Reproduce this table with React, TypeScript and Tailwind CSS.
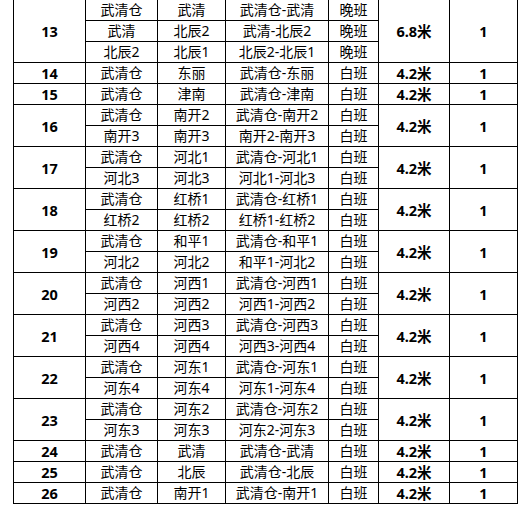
import React from "react";

type Group = { no: string; rows: string[][]; len: string; qty: string };

const groups: Group[] = [
  {
    no: "13",
    rows: [
      ["武清仓", "武清", "武清仓-武清", "晚班"],
      ["武清", "北辰2", "武清-北辰2", "晚班"],
      ["北辰2", "北辰1", "北辰2-北辰1", "晚班"],
    ],
    len: "6.8米",
    qty: "1",
  },
  { no: "14", rows: [["武清仓", "东丽", "武清仓-东丽", "白班"]], len: "4.2米", qty: "1" },
  { no: "15", rows: [["武清仓", "津南", "武清仓-津南", "白班"]], len: "4.2米", qty: "1" },
  {
    no: "16",
    rows: [
      ["武清仓", "南开2", "武清仓-南开2", "白班"],
      ["南开3", "南开3", "南开2-南开3", "白班"],
    ],
    len: "4.2米",
    qty: "1",
  },
  {
    no: "17",
    rows: [
      ["武清仓", "河北1", "武清仓-河北1", "白班"],
      ["河北3", "河北3", "河北1-河北3", "白班"],
    ],
    len: "4.2米",
    qty: "1",
  },
  {
    no: "18",
    rows: [
      ["武清仓", "红桥1", "武清仓-红桥1", "白班"],
      ["红桥2", "红桥2", "红桥1-红桥2", "白班"],
    ],
    len: "4.2米",
    qty: "1",
  },
  {
    no: "19",
    rows: [
      ["武清仓", "和平1", "武清仓-和平1", "白班"],
      ["河北2", "河北2", "和平1-河北2", "白班"],
    ],
    len: "4.2米",
    qty: "1",
  },
  {
    no: "20",
    rows: [
      ["武清仓", "河西1", "武清仓-河西1", "白班"],
      ["河西2", "河西2", "河西1-河西2", "白班"],
    ],
    len: "4.2米",
    qty: "1",
  },
  {
    no: "21",
    rows: [
      ["武清仓", "河西3", "武清仓-河西3", "白班"],
      ["河西4", "河西4", "河西3-河西4", "白班"],
    ],
    len: "4.2米",
    qty: "1",
  },
  {
    no: "22",
    rows: [
      ["武清仓", "河东1", "武清仓-河东1", "白班"],
      ["河东4", "河东4", "河东1-河东4", "白班"],
    ],
    len: "4.2米",
    qty: "1",
  },
  {
    no: "23",
    rows: [
      ["武清仓", "河东2", "武清仓-河东2", "白班"],
      ["河东3", "河东3", "河东2-河东3", "白班"],
    ],
    len: "4.2米",
    qty: "1",
  },
  { no: "24", rows: [["武清仓", "武清", "武清仓-武清", "白班"]], len: "4.2米", qty: "1" },
  { no: "25", rows: [["武清仓", "北辰", "武清仓-北辰", "白班"]], len: "4.2米", qty: "1" },
  { no: "26", rows: [["武清仓", "南开1", "武清仓-南开1", "白班"]], len: "4.2米", qty: "1" },
];

const cell = "flex items-center justify-center border-r border-b border-black";
const norm = "text-[14px] font-normal";
const bold = "text-[14.5px] font-bold";

function spanClass(n: number) {
  if (n === 3) return "row-span-3";
  if (n === 2) return "row-span-2";
  return "row-span-1";
}

export default function App() {
  const items: React.ReactNode[] = [];
  groups.forEach((g, gi) => {
    const span = spanClass(g.rows.length);
    g.rows.forEach((r, ri) => {
      if (ri === 0) {
        items.push(
          <div key={`n${gi}`} className={`${cell} ${span} ${bold}`}>
            {g.no}
          </div>
        );
      }
      r.forEach((t, ci) => {
        items.push(
          <div key={`c${gi}-${ri}-${ci}`} className={`${cell} ${norm}`}>
            {t}
          </div>
        );
      });
      if (ri === 0) {
        items.push(
          <div key={`l${gi}`} className={`${cell} ${span} ${bold}`}>
            {g.len}
          </div>
        );
        items.push(
          <div key={`q${gi}`} className={`${cell} ${span} ${bold}`}>
            {g.qty}
          </div>
        );
      }
    });
  });

  return (
    <div className="w-[530px] h-[509px] overflow-hidden bg-white">
      <div
        className="ml-[13px] mt-[-1px] grid w-[505px] grid-cols-[72px_72px_68px_103px_50px_71px_68px] auto-rows-[21px] border-l border-t border-black leading-[20px] text-black"
        style={{ fontFamily: '"Noto Sans", "Noto Sans CJK SC", sans-serif' }}
      >
        {items}
      </div>
    </div>
  );
}
